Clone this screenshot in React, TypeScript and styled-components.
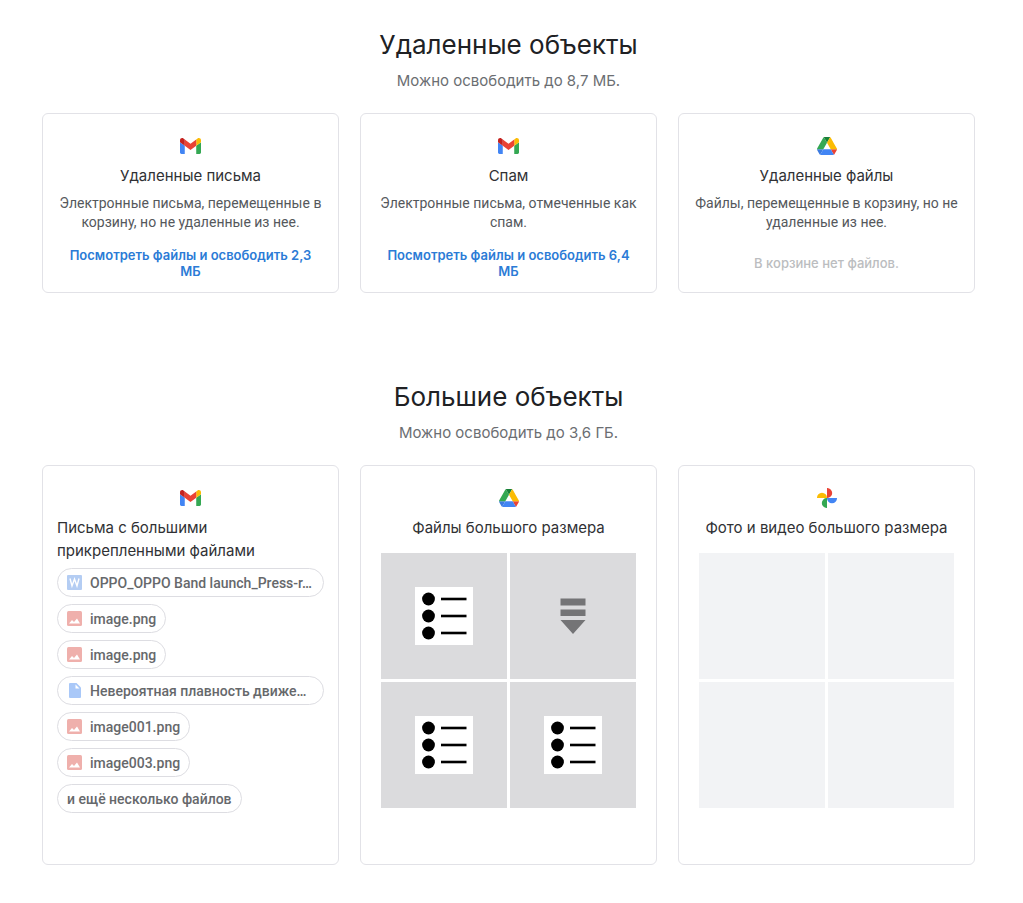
import React from "react";
import styled, { createGlobalStyle } from "styled-components";

const GlobalStyle = createGlobalStyle`
  * { box-sizing: border-box; }
  body { margin: 0; background: #fff; color: #202124; font-family: Roboto, "Liberation Sans", sans-serif; }
  h2, h3, p, ul { margin: 0; padding: 0; font-weight: 400; }
  ul { list-style: none; }
`;

const display = `Inter, "Open Sans", sans-serif`;

const Page = styled.main`
  display: flex;
  flex-direction: column;
  gap: 87px;
  padding: 28px 48px 38px 42px;
`;

const Section = styled.section`
  display: flex;
  flex-direction: column;
`;

const Heading = styled.h2`
  font-family: ${display};
  font-size: 26px;
  line-height: 34px;
  text-align: center;
`;

const Summary = styled.p`
  margin: 9px 0 22px;
  font-family: ${display};
  font-size: 15px;
  line-height: 20px;
  text-align: center;
  color: #6b6e72;
`;

const Cards = styled.div`
  display: grid;
  grid-template-columns: repeat(3, minmax(0, 1fr));
  gap: 21px;
`;

const Card = styled.article<{ $tall?: boolean }>`
  display: flex;
  flex-direction: column;
  min-height: ${(p) => (p.$tall ? 400 : 180)}px;
  padding: 20px 14px 13px;
  border: 1px solid #e2e2e7;
  border-radius: 6px;
  text-align: center;
`;

const Logo = styled.div`
  display: flex;
  align-items: center;
  justify-content: center;
  height: 24px;
`;

const Title = styled.h3<{ $left?: boolean }>`
  margin-top: 6px;
  font-family: ${display};
  font-size: 15px;
  line-height: 23px;
  color: #303134;
  text-align: ${(p) => (p.$left ? "left" : "center")};
`;

const Description = styled.p`
  margin-top: 7px;
  font-size: 14px;
  line-height: 19px;
  color: #55585c;
`;

const Action = styled.div`
  display: flex;
  align-items: center;
  justify-content: center;
  min-height: 32px;
  margin-top: auto;
  padding: 0 10px;
  font-family: ${display};
  font-size: 13px;
  font-weight: 500;
  line-height: 16px;
  color: #bbbdc0;
`;

const ActionLink = styled.a`
  font-weight: 600;
  color: #2b7bd6;
  text-decoration: none;
`;

const Chips = styled.ul`
  display: flex;
  flex-direction: column;
  gap: 7px;
  margin-top: 6px;
`;

const ChipItem = styled.li`
  display: flex;
`;

const Chip = styled.button<{ $full?: boolean }>`
  display: flex;
  align-items: center;
  gap: 8px;
  width: ${(p) => (p.$full ? "100%" : "auto")};
  height: 29px;
  padding: 0 9px;
  border: 1px solid #dddde2;
  border-radius: 15px;
  background: #fff;
  color: #66686b;
  font: 500 14px/20px Roboto, "Liberation Sans", sans-serif;
  white-space: nowrap;
  cursor: pointer;

  svg { flex: none; }
`;

const Tiles = styled.div`
  display: grid;
  grid-template-columns: 1fr 1fr;
  gap: 3px;
  margin: 14px 6px 0;
`;

const Tile = styled.div<{ $empty?: boolean }>`
  display: flex;
  align-items: center;
  justify-content: center;
  aspect-ratio: 1;
  background: ${(p) => (p.$empty ? "#f2f3f5" : "#dbdbdd")};
`;

const Gmail = () => (
  <svg width="21" height="16" viewBox="52 42 88 66" aria-hidden="true">
    <path fill="#4285f4" d="M58 108h14V74L52 59v43c0 3.32 2.69 6 6 6" />
    <path fill="#34a853" d="M120 108h14c3.32 0 6-2.69 6-6V59l-20 15" />
    <path fill="#fbbc04" d="M120 48v26l20-15v-8c0-7.42-8.47-11.65-14.4-7.2" />
    <path fill="#ea4335" d="M72 74V48l24 18 24-18v26L96 92" />
    <path fill="#c5221f" d="M52 51v8l20 15V48l-5.6-4.2c-5.94-4.45-14.4-.22-14.4 7.2" />
  </svg>
);

const Drive = () => (
  <svg width="20" height="18" viewBox="0 0 87.3 78" aria-hidden="true">
    <path fill="#3c7be0" d="m6.6 66.85 3.85 6.65c.8 1.4 1.95 2.5 3.3 3.3l13.75-23.8h-27.5c0 1.55.4 3.1 1.2 4.5z" />
    <path fill="#34a853" d="m43.65 25-13.75-23.8c-1.35.8-2.5 1.9-3.3 3.3l-25.4 44a9.06 9.06 0 0 0-1.2 4.5h27.5z" />
    <path fill="#ea4335" d="m73.55 76.8c1.35-.8 2.5-1.9 3.3-3.3l1.6-2.75 7.65-13.25c.8-1.4 1.2-2.95 1.2-4.5h-27.5l5.85 11.5z" />
    <path fill="#188038" d="m43.65 25 13.75-23.8c-1.35-.8-2.9-1.2-4.5-1.2h-18.5c-1.6 0-3.15.45-4.5 1.2z" />
    <path fill="#4285f4" d="m59.8 53h-32.3l-13.75 23.8c1.35.8 2.9 1.2 4.5 1.2h50.8c1.6 0 3.15-.45 4.5-1.2z" />
    <path fill="#fbbc04" d="m73.4 26.5-12.7-22c-.8-1.4-1.95-2.5-3.3-3.3l-13.75 23.8 16.15 28h27.45c0-1.55-.4-3.1-1.2-4.5z" />
  </svg>
);

const Photos = () => (
  <svg width="20" height="20" viewBox="0 0 20 20" aria-hidden="true">
    <path fill="#ea4335" d="M10 0a5 5 0 0 1 5.2 5A5 5 0 0 1 10 10z" />
    <path fill="#4285f4" d="M20 10a5 5 0 0 1-5 5.2A5 5 0 0 1 10 10z" />
    <path fill="#34a853" d="M10 20a5 5 0 0 1-5.2-5A5 5 0 0 1 10 10z" />
    <path fill="#fbbc04" d="M0 10a5 5 0 0 1 5-5.2A5 5 0 0 1 10 10z" />
  </svg>
);

const WordIcon = () => (
  <svg width="15" height="15" viewBox="0 0 15 15" aria-hidden="true">
    <rect width="15" height="15" rx="1" fill="#b4cdf3" />
    <path d="M3 3.500l2 7.500 2.500-7L10 11l2-7.500" fill="none" stroke="#fff" strokeWidth="1.400" />
  </svg>
);

const ImageIcon = () => (
  <svg width="15" height="15" viewBox="0 0 15 15" aria-hidden="true">
    <rect width="15" height="15" rx="1.500" fill="#efb0ac" />
    <path d="M2 12.500l3-3.500 2 2 3-3.500 3 5z" fill="#fff" />
  </svg>
);

const FileIcon = () => (
  <svg width="15" height="15" viewBox="0 0 15 15" aria-hidden="true">
    <path d="M3 0h6.500L14 4.500V14a1 1 0 0 1-1 1H3a1 1 0 0 1-1-1V1a1 1 0 0 1 1-1z" fill="#a9c8f8" />
    <path d="M8.500 1.500v4h4z" fill="#fff" />
  </svg>
);

const ListPreview = () => (
  <svg width="58" height="58" viewBox="0 0 58 58" aria-hidden="true">
    <rect width="58" height="58" fill="#fff" />
    {[12, 29, 46].map((y) => (
      <g key={y}>
        <circle cx="13.500" cy={y} r="6.400" fill="#000" />
        <path d={`M26 ${y}h25.500`} stroke="#000" strokeWidth="2.600" />
      </g>
    ))}
  </svg>
);

const ArchivePreview = () => (
  <svg width="26" height="36" viewBox="0 0 26 36" aria-hidden="true">
    <path d="M.5 .5h25v7H.5zM.5 11.500h25v6.500H.5zM.5 22h25L13 36z" fill="#747476" />
  </svg>
);

const trash = [
  {
    logo: <Gmail />,
    title: "Удаленные письма",
    text: "Электронные письма, перемещенные в корзину, но не удаленные из нее.",
    link: "Посмотреть файлы и освободить 2,3 МБ",
  },
  {
    logo: <Gmail />,
    title: "Спам",
    text: "Электронные письма, отмеченные как спам.",
    link: "Посмотреть файлы и освободить 6,4 МБ",
  },
  {
    logo: <Drive />,
    title: "Удаленные файлы",
    text: "Файлы, перемещенные в корзину, но не удаленные из нее.",
    empty: "В корзине нет файлов.",
  },
];

const attachments = [
  { icon: <WordIcon />, name: "OPPO_OPPO Band launch_Press-r…", full: true },
  { icon: <ImageIcon />, name: "image.png" },
  { icon: <ImageIcon />, name: "image.png" },
  { icon: <FileIcon />, name: "Невероятная плавность движе…", full: true },
  { icon: <ImageIcon />, name: "image001.png" },
  { icon: <ImageIcon />, name: "image003.png" },
  { icon: null, name: "и ещё несколько файлов" },
];

export default function App() {
  return (
    <>
      <GlobalStyle />
      <Page>
        <Section>
          <Heading>Удаленные объекты</Heading>
          <Summary>Можно освободить до 8,7 МБ.</Summary>
          <Cards>
            {trash.map((c) => (
              <Card key={c.title}>
                <Logo>{c.logo}</Logo>
                <Title>{c.title}</Title>
                <Description>{c.text}</Description>
                <Action>{c.link ? <ActionLink href="#">{c.link}</ActionLink> : c.empty}</Action>
              </Card>
            ))}
          </Cards>
        </Section>
        <Section>
          <Heading>Большие объекты</Heading>
          <Summary>Можно освободить до 3,6 ГБ.</Summary>
          <Cards>
            <Card $tall>
              <Logo><Gmail /></Logo>
              <Title $left>Письма с большими прикрепленными файлами</Title>
              <Chips>
                {attachments.map((a, i) => (
                  <ChipItem key={i}>
                    <Chip type="button" $full={a.full}>
                      {a.icon}
                      <span>{a.name}</span>
                    </Chip>
                  </ChipItem>
                ))}
              </Chips>
            </Card>
            <Card $tall>
              <Logo><Drive /></Logo>
              <Title>Файлы большого размера</Title>
              <Tiles>
                <Tile><ListPreview /></Tile>
                <Tile><ArchivePreview /></Tile>
                <Tile><ListPreview /></Tile>
                <Tile><ListPreview /></Tile>
              </Tiles>
            </Card>
            <Card $tall>
              <Logo><Photos /></Logo>
              <Title>Фото и видео большого размера</Title>
              <Tiles>
                {[0, 1, 2, 3].map((n) => <Tile key={n} $empty />)}
              </Tiles>
            </Card>
          </Cards>
        </Section>
      </Page>
    </>
  );
}
